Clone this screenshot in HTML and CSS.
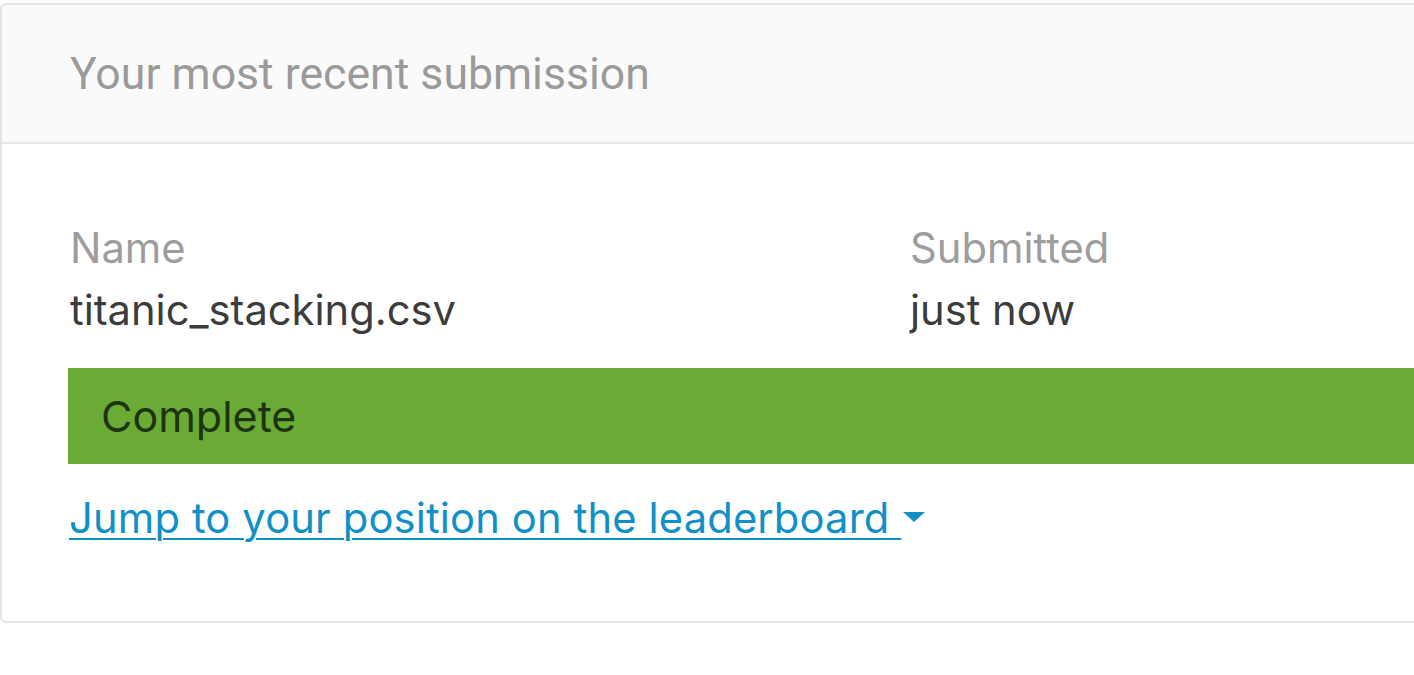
FILE: index.html
```html
<!DOCTYPE html>
<html>
<head>
<meta charset="utf-8">
<link rel="stylesheet" href="styles.css">
</head>
<body>
<div class="card">
  <div class="card-header">Your most recent submission</div>
  <div class="card-body">
    <div class="meta">
      <div class="col">
        <div class="label">Name</div>
        <div class="value">titanic_stacking.csv</div>
      </div>
      <div class="col">
        <div class="label">Submitted</div>
        <div class="value">just now</div>
      </div>
    </div>
    <div class="status">Complete</div>
    <div class="jump-row"><a class="jump" href="#">Jump to your position on the leaderboard </a><span class="caret"></span></div>
  </div>
</div>
</body>
</html>
```

FILE: styles.css
```css
html, body {
  margin: 0;
  padding: 0;
  background: #ffffff;
  overflow: hidden;
}
body {
  padding-top: 3px;
  width: 1414px;
  height: 672px;
}
.card {
  width: 1460px;
  border: 2px solid #e4e4e4;
  border-radius: 6px;
  overflow: hidden;
  box-sizing: border-box;
}
.card-header {
  background: #fafafa;
  height: 139px;
  border-bottom: 2px solid #e8e8e8;
  box-sizing: border-box;
  display: flex;
  align-items: center;
  padding-left: 68px;
  font-family: Roboto, "Liberation Sans", sans-serif;
  font-size: 44.6px;
  color: #9a9a9a;
}
.card-body {
  padding: 73px 0 72px 66px;
  font-family: Inter, "Liberation Sans", sans-serif;
}
.meta {
  display: grid;
  grid-template-columns: 840px 1fr;
}
.label {
  font-size: 41.7px;
  line-height: 62px;
  color: #9d9d9d;
  padding-left: 2px;
}
.value {
  font-size: 41.7px;
  line-height: 62px;
  color: #3c3c3c;
  padding-left: 2px;
}
.status {
  margin-top: 27px;
  background: #69ab35;
  height: 96px;
  display: flex;
  align-items: center;
  padding-left: 33px;
  font-size: 43px;
  color: #1e3411;
}
.jump-row {
  display: flex;
  align-items: center;
  margin-top: 23px;
  margin-left: 1px;
  height: 62px;
}
.jump {
  white-space: pre;
  font-size: 41.7px;
  line-height: 62px;
  letter-spacing: 0.15px;
  color: #1190c8;
  text-decoration: underline;
  text-decoration-thickness: 2px;
  text-underline-offset: 5px;
}
.caret {
  width: 0;
  height: 0;
  margin-left: 2px;
  margin-bottom: 2px;
  border-left: 11px solid transparent;
  border-right: 11px solid transparent;
  border-top: 10px solid #1190c8;
}
```
